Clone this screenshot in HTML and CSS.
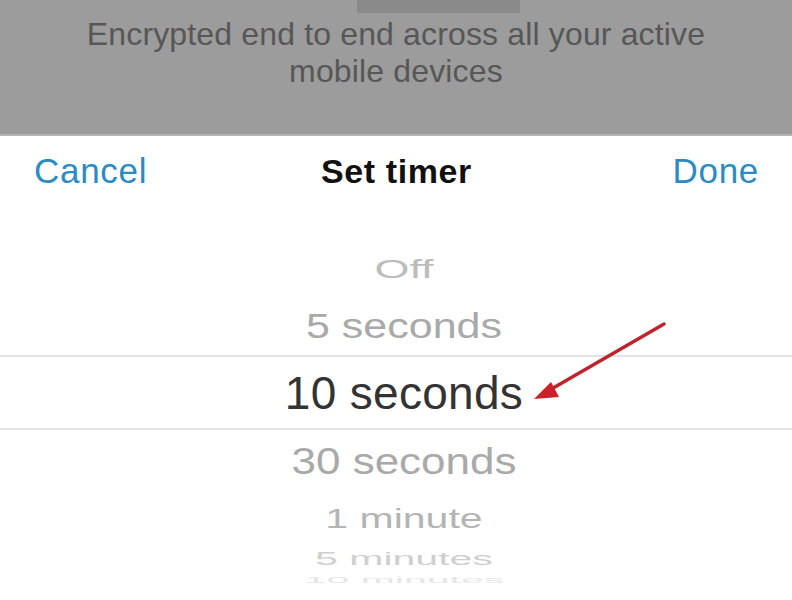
FILE: index.html
```html
<!DOCTYPE html>
<html>
<head>
    <title>Set timer</title>
    <link rel="stylesheet" href="styles.css">
</head>
<body>
    <div class="screen">
        <div class="dimmed">
            <div class="dimmed-top">
                <span class="dimmed-block"></span>
            </div>
            <p class="dimmed-text">Encrypted end to end across all your active<br>mobile devices</p>
        </div>

        <div class="sheet">
            <div class="toolbar">
                <span class="toolbar-btn">Cancel</span>
                <span class="toolbar-title">Set timer</span>
                <span class="toolbar-btn toolbar-done">Done</span>
            </div>

            <div class="picker">
                <div class="row row-off"><span>Off</span></div>
                <div class="row row-5s"><span>5 seconds</span></div>
                <div class="row row-selected"><span>10 seconds</span></div>
                <div class="row row-30s"><span>30 seconds</span></div>
                <div class="row row-1m"><span>1 minute</span></div>
                <div class="row row-5m"><span>5 minutes</span></div>
                <div class="row row-10m"><span>10 minutes</span></div>
            </div>
        </div>

        <!-- annotation arrow pointing at the selected value -->
        <svg class="arrow" width="792" height="600" viewBox="0 0 792 600">
            <line x1="664" y1="324" x2="548" y2="391" stroke="#bd242c" stroke-width="3.5" stroke-linecap="round"/>
            <polygon points="534,399 551,382 559,397" fill="#cc1f29"/>
        </svg>
    </div>
</body>
</html>
```

FILE: styles.css
```css
body {
    margin: 0;
    font-family: "Liberation Sans", Arial, sans-serif;
    background: #fff;
}
.screen {
    position: relative;
    width: 792px;
    height: 600px;
    overflow: hidden;
}
.dimmed {
    height: 134px;
    background: #9c9c9c;
    border-bottom: 2px solid #b4b4b4;
}
.dimmed-top {
    display: flex;
    justify-content: center;
    height: 14px;
}
.dimmed-block {
    width: 163px;
    height: 13px;
    background: #8a8a8a;
    margin-left: 85px;
}
.dimmed-text {
    margin: 0;
    padding-top: 2px;
    text-align: center;
    color: #575757;
    font-size: 32px;
    line-height: 37px;
    letter-spacing: 0.15px;
}
.sheet {
    background: #fff;
}
.toolbar {
    display: grid;
    grid-template-columns: 1fr auto 1fr;
    align-items: center;
    height: 70px;
    padding: 0 33px 0 34px;
}
.toolbar-btn {
    color: #2b8bc2;
    font-size: 35px;
    letter-spacing: 0.7px;
}
.toolbar-done {
    justify-self: end;
}
.toolbar-title {
    color: #111;
    font-size: 34px;
    font-weight: bold;
    letter-spacing: 0.6px;
}
.picker {
    display: flex;
    flex-direction: column;
    padding-top: 36px;
}
.row {
    display: flex;
    justify-content: center;
    align-items: center;
    padding-left: 16px;
    color: #b0b0b0;
}
.row span {
    display: inline-block;
}
.row-off {
    height: 56px;
    font-size: 45px;
    color: #bcbcbc;
}
.row-off span {
    transform: scaleY(0.56);
}
.row-5s {
    height: 57px;
    font-size: 43px;
    color: #a9a9a9;
}
.row-5s span {
    transform: scaleY(0.82);
}
.row-selected {
    height: 71px;
    border-top: 2px solid #e4e4e4;
    border-bottom: 2px solid #e4e4e4;
    font-size: 46px;
    color: #333;
    letter-spacing: 0.3px;
}
.row-30s {
    height: 62px;
    font-size: 44px;
    color: #a9a9a9;
}
.row-30s span {
    transform: scaleY(0.86);
}
.row-1m {
    height: 52px;
    font-size: 41px;
    color: #b4b4b4;
}
.row-1m span {
    transform: scaleY(0.68);
}
.row-5m {
    height: 28px;
    font-size: 41px;
    color: #cfcfcf;
}
.row-5m span {
    transform: scaleY(0.45);
}
.row-10m {
    height: 16px;
    font-size: 41px;
    color: #e6e6e6;
    overflow: hidden;
}
.row-10m span {
    transform: scaleY(0.2);
}
.arrow {
    position: absolute;
    top: 0;
    left: 0;
}
```
